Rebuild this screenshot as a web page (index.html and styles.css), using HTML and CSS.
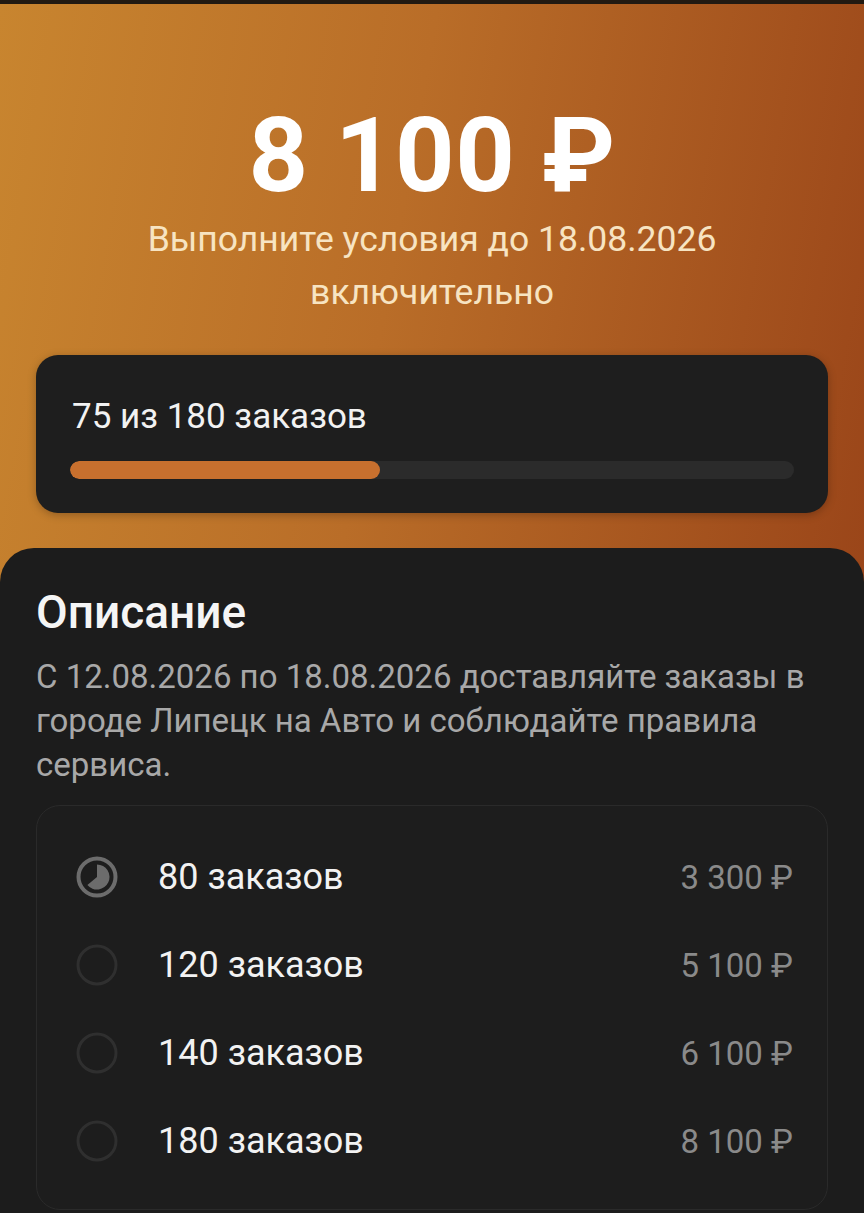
FILE: index.html
```html
<!DOCTYPE html>
<html lang="ru">
<head>
<meta charset="utf-8">
<link rel="stylesheet" href="styles.css">
</head>
<body>
<div class="topline"></div>
<main class="screen">
  <header class="hero">
    <div class="amount">8 100 ₽</div>
    <div class="subtitle">Выполните условия до 18.08.2026<br>включительно</div>
    <div class="progress-card">
      <div class="progress-label">75 из 180 заказов</div>
      <div class="track"><div class="fill" style="width:42.8%"></div></div>
    </div>
  </header>
  <section class="sheet">
    <h2 class="title">Описание</h2>
    <p class="desc">С 12.08.2026 по 18.08.2026 доставляйте заказы в городе Липецк на Авто и соблюдайте правила сервиса.</p>
    <div class="levels">
      <div class="row">
        <svg class="radio" viewBox="0 0 42 42" width="42" height="42"><circle cx="21" cy="21" r="18.5" fill="none" stroke="#6c6c6c" stroke-width="4"/><path d="M21 21 L21 8.5 A12.5 12.5 0 1 1 11.4 29 Z" fill="#6c6c6c"/></svg>
        <span class="name">80 заказов</span>
        <span class="price">3 300 ₽</span>
      </div>
      <div class="row">
        <svg class="radio" viewBox="0 0 42 42" width="42" height="42"><circle cx="21" cy="21" r="19" fill="none" stroke="#2f2f2f" stroke-width="3"/></svg>
        <span class="name">120 заказов</span>
        <span class="price">5 100 ₽</span>
      </div>
      <div class="row">
        <svg class="radio" viewBox="0 0 42 42" width="42" height="42"><circle cx="21" cy="21" r="19" fill="none" stroke="#2f2f2f" stroke-width="3"/></svg>
        <span class="name">140 заказов</span>
        <span class="price">6 100 ₽</span>
      </div>
      <div class="row">
        <svg class="radio" viewBox="0 0 42 42" width="42" height="42"><circle cx="21" cy="21" r="19" fill="none" stroke="#2f2f2f" stroke-width="3"/></svg>
        <span class="name">180 заказов</span>
        <span class="price">8 100 ₽</span>
      </div>
    </div>
  </section>
</main>
</body>
</html>
```
FILE: styles.css
```css
* { box-sizing: border-box; }
html, body { margin: 0; padding: 0; }
body {
  width: 864px;
  height: 1213px;
  overflow: hidden;
  background: #1c1c1c;
  font-family: Roboto, "Liberation Sans", sans-serif;
}
.topline { height: 4px; background: #221a12; }
.screen {
  background-color: #1c1c1c;
  background-image: linear-gradient(100deg, #c8852f 0%, #b96d28 45%, #9a4519 100%);
  background-size: 100% 620px;
  background-repeat: no-repeat;
}
.hero {
  padding: 100px 36px 35px;
  text-align: center;
}
.amount {
  font-size: 104px;
  line-height: 104px;
  font-weight: 700;
  color: #ffffff;
  letter-spacing: 0.5px;
}
.subtitle {
  margin-top: 5px;
  font-size: 35.5px;
  line-height: 53px;
  color: #f7e4c2;
}
.progress-card {
  margin-top: 36px;
  background: #1e1e1e;
  border-radius: 22px;
  padding: 42px 34px 34px;
  text-align: left;
  box-shadow: 0 2px 8px rgba(0,0,0,0.25);
}
.progress-label {
  font-size: 35px;
  line-height: 40px;
  color: #f2f2f2;
  padding-left: 2px;
}
.track {
  margin-top: 24px;
  height: 18px;
  border-radius: 9px;
  background: #2b2b2b;
  overflow: hidden;
}
.fill {
  height: 100%;
  border-radius: 9px;
  background: #c8702e;
}
.sheet {
  background: #1c1c1c;
  border-radius: 34px 34px 0 0;
  padding: 40px 36px 0;
}
.title {
  margin: 0;
  font-size: 46px;
  line-height: 48px;
  font-weight: 500;
  color: #f5f5f5;
}
.desc {
  margin: 19px 0 0;
  font-size: 33px;
  line-height: 44px;
  color: #a8a8a8;
}
.levels {
  margin-top: 18px;
  border: 1px solid #2a2a2a;
  border-radius: 24px;
  background: #1d1d1d;
  padding: 27px 34px 24px 39px;
}
.row {
  display: flex;
  align-items: center;
  height: 88px;
}
.radio { flex: none; }
.name {
  margin-left: 40px;
  font-size: 36px;
  color: #f2f2f2;
}
.price {
  margin-left: auto;
  font-size: 33px;
  color: #8a8a8a;
}
```
